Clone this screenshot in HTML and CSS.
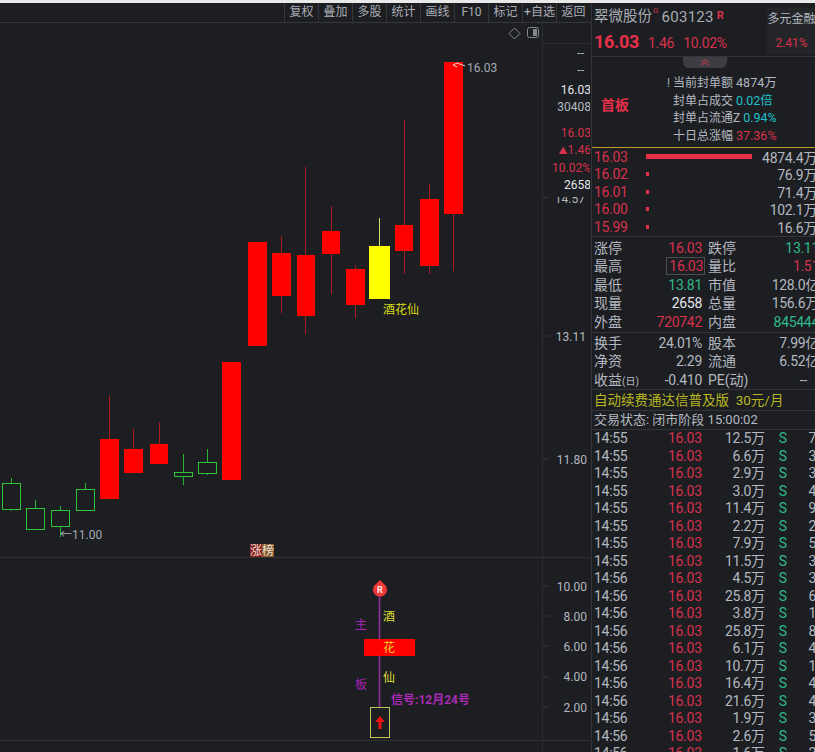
FILE: index.html
```html
<!DOCTYPE html>
<html lang="zh-CN">
<head>
    <meta charset="UTF-8">
    <meta name="viewport" content="width=device-width, initial-scale=1.0">
    <title>翠微股份 603123</title>
    <link rel="stylesheet" href="styles.css">
</head>
<body>
    <div class="topStrip"></div>
    <div class="app">
        <div class="left">
            <div class="toolbar">
                <div class="toolBtn">复权</div>
                <div class="toolBtn">叠加</div>
                <div class="toolBtn">多股</div>
                <div class="toolBtn">统计</div>
                <div class="toolBtn">画线</div>
                <div class="toolBtn">F10</div>
                <div class="toolBtn">标记</div>
                <div class="toolBtn">+自选</div>
                <div class="toolBtn">返回</div>
            </div>
            <svg class="chart" viewBox="0 23 590 729" width="590" height="729">
                <!-- frame lines -->
                <line class="grid" x1="542.5" y1="23" x2="542.5" y2="752"/>
                <line class="grid" x1="543" y1="43.5" x2="590" y2="43.5"/>
                <line class="divider" x1="0" y1="557.5" x2="590" y2="557.5"/>
                <line class="divider" x1="0" y1="740.5" x2="590" y2="740.5"/>

                <!-- top icons -->
                <polygon class="iconLine" points="514.5,28 520,33.5 514.5,39 509,33.5"/>
                <rect class="iconLine" x="527.5" y="27.5" width="11" height="10" rx="2"/>
                <rect class="iconFill" x="533" y="29" width="4" height="7"/>

                <!-- green candles -->
                <g class="green">
                    <path d="M11.5 478v5M11.5 510v1M35.5 500v8M60.5 506v4M60.5 527v10M85.5 483v6M183.5 454v19M183.5 477v8M207.5 449v13M207.5 474v1"/>
                    <rect x="2.5" y="483.5" width="18" height="26"/>
                    <rect x="26.5" y="508.5" width="18" height="21"/>
                    <rect x="51.5" y="510.5" width="18" height="16"/>
                    <rect x="76.5" y="489.5" width="18" height="21"/>
                    <rect x="174.5" y="472.5" width="18" height="4"/>
                    <rect x="198.5" y="462.5" width="18" height="11"/>
                </g>

                <!-- red candles: wicks -->
                <g class="wick">
                    <path d="M109.5 395v44M133.5 429v20M159.5 422v22M281.5 236v77M305.5 167v167M331.5 206v88M355.5 265v53M404.5 120v154M429.5 184v90M453.5 214v57"/>
                </g>
                <g class="red">
                    <rect x="100" y="439" width="19" height="60"/>
                    <rect x="124" y="449" width="19" height="24"/>
                    <rect x="150" y="444" width="18" height="20"/>
                    <rect x="222" y="362" width="19" height="118"/>
                    <rect x="248" y="242" width="19" height="104"/>
                    <rect x="272" y="253" width="19" height="43"/>
                    <rect x="297" y="255" width="18" height="61"/>
                    <rect x="322" y="231" width="18" height="23"/>
                    <rect x="346" y="269" width="19" height="36"/>
                    <rect x="395" y="225" width="18" height="26"/>
                    <rect x="420" y="199" width="19" height="67"/>
                    <rect x="444" y="62" width="19" height="152"/>
                </g>
                <line class="yellowWick" x1="379.5" y1="218" x2="379.5" y2="246"/>
                <rect class="yellowBody" x="369" y="246" width="21" height="53"/>
                <text class="yellowLabel" x="383" y="314">酒花仙</text>

                <!-- price marks -->
                <path class="mark" d="M453 65l4-2 8 3M453 65l4 2"/>
                <text class="mark-text" x="467" y="72">16.03</text>
                <text class="mark-text" x="60" y="539">←11.00</text>

                <!-- badge -->
                <rect class="badgeA" x="250" y="544" width="12" height="13"/>
                <rect class="badgeB" x="262" y="544" width="12" height="13"/>
                <text class="badgeText" x="250" y="555">涨榜</text>

                <!-- axis, upper; the quote box hides the top of 14.57 -->
                <g class="axis">
                    <text x="585" y="203">14.57</text>
                    <rect class="quoteBox" x="543" y="44" width="47" height="153"/>
                    <text x="584" y="57">--</text>
                    <text x="584" y="74">--</text>
                    <text x="591" y="94" class="white">16.03</text>
                    <text x="591" y="111">30408</text>
                    <text x="591" y="137" class="redText">16.03</text>
                    <text x="591" y="154" class="redText"><tspan class="tri">▲</tspan>1.46</text>
                    <text x="591" y="172" class="redText">10.02%</text>
                    <text x="591" y="189" class="white">2658</text>
                    <text x="586" y="341">13.11</text>
                    <text x="587" y="464">11.80</text>
                    <text x="587" y="591">10.00</text>
                    <text x="587" y="621">8.00</text>
                    <text x="587" y="651">6.00</text>
                    <text x="587" y="681">4.00</text>
                    <text x="587" y="712">2.00</text>
                </g>
                <path class="tick" d="M543 197.500h6M543 336h6M543 459h6M543 586h6M543 616h6M543 646h6M543 677h6M543 707h6"/>

                <!-- signal column -->
                <line class="signalLine" x1="379.5" y1="595" x2="379.5" y2="707"/>
                <path class="pin" d="M380 580l6 6a7 7 0 1 1-12 0z"/>
                <text class="pinText" x="380" y="593">R</text>
                <text class="sigYellow" x="383" y="621">酒</text>
                <text class="sigPurple" x="355" y="629">主</text>
                <rect class="red" x="364" y="639" width="51" height="17"/>
                <text class="sigOrange" x="383" y="652">花</text>
                <text class="sigYellow" x="383" y="682">仙</text>
                <text class="sigPurple" x="355" y="689">板</text>
                <text class="sigDate" x="391" y="704">信号:12月24号</text>
                <rect class="sigBox" x="370.5" y="707.5" width="19" height="30"/>
                <path class="sigArrow" d="M380 716l5 6h-3.500v7h-3v-7h-3.500z"/>
            </svg>
        </div>

        <div class="side">
            <div class="head">
                <div class="headMain">
                    <div class="nameRow">
                        <span class="name">翠微股份</span><sup class="flag">G</sup>
                        <span class="code">603123</span><sup class="flagR">R</sup>
                    </div>
                    <div class="priceRow">
                        <span class="lastPrice">16.03</span>
                        <span class="chg">1.46</span>
                        <span class="chg">10.02%</span>
                    </div>
                </div>
                <div class="sector">
                    <div class="sectorName">多元金融</div>
                    <div class="sectorPct">2.41%</div>
                </div>
            </div>

            <div class="seal">
                <div class="foldTab"><svg width="10" height="7" viewBox="0 0 10 7"><path d="M1 3.500l4-3 4 3M1 6.500l4-3 4 3" fill="none" stroke="#c8394c"/></svg></div>
                <div class="sealBody">
                    <div class="sealTag">首板</div>
                    <div class="sealLines">
                        <p><i class="bang">!</i>当前封单额 <span class="num">4874万</span></p>
                        <p>封单占成交 <span class="num cyan">0.02倍</span></p>
                        <p>封单占流通Z <span class="num cyan">0.94%</span></p>
                        <p>十日总涨幅 <span class="num pink">37.36%</span></p>
                    </div>
                </div>
            </div>

            <div class="orders">
                <div class="orderRow"><span class="oPrice">16.03</span><span class="oBar"><b class="barLong"></b></span><span class="oVol">4874.4万</span></div>
                <div class="orderRow"><span class="oPrice">16.02</span><span class="oBar"><b class="barDot"></b></span><span class="oVol">76.9万</span></div>
                <div class="orderRow"><span class="oPrice">16.01</span><span class="oBar"><b class="barDot"></b></span><span class="oVol">71.4万</span></div>
                <div class="orderRow"><span class="oPrice">16.00</span><span class="oBar"><b class="barDot"></b></span><span class="oVol">102.1万</span></div>
                <div class="orderRow"><span class="oPrice">15.99</span><span class="oBar"><b class="barDot"></b></span><span class="oVol">16.6万</span></div>
            </div>

            <div class="stats statsA">
                <div class="statRow"><span class="lab">涨停</span><span class="val pink"><em>16.03</em></span><span class="lab">跌停</span><span class="val2 green">13.11</span></div>
                <div class="statRow"><span class="lab">最高</span><span class="val pink"><em class="boxed">16.03</em></span><span class="lab">量比</span><span class="val2 pink">1.51</span></div>
                <div class="statRow"><span class="lab">最低</span><span class="val green"><em>13.81</em></span><span class="lab">市值</span><span class="val2">128.0亿</span></div>
                <div class="statRow"><span class="lab">现量</span><span class="val white"><em>2658</em></span><span class="lab">总量</span><span class="val2">156.6万</span></div>
                <div class="statRow"><span class="lab">外盘</span><span class="val pink"><em>720742</em></span><span class="lab">内盘</span><span class="val2 green">845444</span></div>
            </div>
            <div class="stats statsB">
                <div class="statRow"><span class="lab">换手</span><span class="val"><em>24.01%</em></span><span class="lab">股本</span><span class="val2">7.99亿</span></div>
                <div class="statRow"><span class="lab">净资</span><span class="val"><em>2.29</em></span><span class="lab">流通</span><span class="val2">6.52亿</span></div>
                <div class="statRow"><span class="lab">收益<small class="paren">(日)</small></span><span class="val"><em>-0.410</em></span><span class="lab">PE(动)</span><span class="val2 dash">--</span></div>
            </div>

            <div class="promo">自动续费通达信普及版&nbsp; 30元/月</div>
            <div class="status">交易状态: 闭市阶段 15:00:02</div>

            <div class="ticks">
                <div class="tick1"><span>14:55</span><span class="pink">16.03</span><span class="amt">12.5万</span><span class="green">S</span><span>7</span></div>
                <div class="tick1"><span>14:55</span><span class="pink">16.03</span><span class="amt">6.6万</span><span class="green">S</span><span>3</span></div>
                <div class="tick1"><span>14:55</span><span class="pink">16.03</span><span class="amt">2.9万</span><span class="green">S</span><span>3</span></div>
                <div class="tick1"><span>14:55</span><span class="pink">16.03</span><span class="amt">3.0万</span><span class="green">S</span><span>4</span></div>
                <div class="tick1"><span>14:55</span><span class="pink">16.03</span><span class="amt">11.4万</span><span class="green">S</span><span>9</span></div>
                <div class="tick1"><span>14:55</span><span class="pink">16.03</span><span class="amt">2.2万</span><span class="green">S</span><span>2</span></div>
                <div class="tick1"><span>14:55</span><span class="pink">16.03</span><span class="amt">7.9万</span><span class="green">S</span><span>5</span></div>
                <div class="tick1"><span>14:55</span><span class="pink">16.03</span><span class="amt">11.5万</span><span class="green">S</span><span>3</span></div>
                <div class="tick1"><span>14:56</span><span class="pink">16.03</span><span class="amt">4.5万</span><span class="green">S</span><span>3</span></div>
                <div class="tick1"><span>14:56</span><span class="pink">16.03</span><span class="amt">25.8万</span><span class="green">S</span><span>6</span></div>
                <div class="tick1"><span>14:56</span><span class="pink">16.03</span><span class="amt">3.8万</span><span class="green">S</span><span>1</span></div>
                <div class="tick1"><span>14:56</span><span class="pink">16.03</span><span class="amt">25.8万</span><span class="green">S</span><span>8</span></div>
                <div class="tick1"><span>14:56</span><span class="pink">16.03</span><span class="amt">6.1万</span><span class="green">S</span><span>4</span></div>
                <div class="tick1"><span>14:56</span><span class="pink">16.03</span><span class="amt">10.7万</span><span class="green">S</span><span>1</span></div>
                <div class="tick1"><span>14:56</span><span class="pink">16.03</span><span class="amt">16.4万</span><span class="green">S</span><span>4</span></div>
                <div class="tick1"><span>14:56</span><span class="pink">16.03</span><span class="amt">21.6万</span><span class="green">S</span><span>4</span></div>
                <div class="tick1"><span>14:56</span><span class="pink">16.03</span><span class="amt">1.9万</span><span class="green">S</span><span>3</span></div>
                <div class="tick1"><span>14:56</span><span class="pink">16.03</span><span class="amt">2.6万</span><span class="green">S</span><span>5</span></div>
                <div class="tick1"><span>14:56</span><span class="pink">16.03</span><span class="amt">1.6万</span><span class="green">S</span><span>2</span></div>
            </div>
        </div>
    </div>
</body>
</html>
```

FILE: styles.css
```css
html, body{
    margin: 0;
    height: 752px;
    overflow: hidden;
    background-color: #1c1e22;
}
body{
    font-family: Roboto, "Noto Sans CJK SC", sans-serif;
    font-size: 14px;
    color: #b4b8c0;
}
p{
    margin: 0;
}
em, i{
    font-style: normal;
}
.topStrip{
    height: 3px;
    background-color: #e9e9e9;
}
.app{
    display: flex;
    height: 749px;
}

/* left part: toolbar and chart */
.left{
    width: 591px;
    flex-shrink: 0;
}
.toolbar{
    display: flex;
    justify-content: flex-end;
    height: 19px;
    padding-right: 1px;
    border-bottom: 1px solid #35373b;
}
.toolBtn{
    width: 33px;
    border-left: 1px solid #35373b;
    text-align: center;
    font-size: 12px;
    line-height: 18px;
    color: #a9adb4;
    white-space: nowrap;
}
.chart{
    display: block;
}
.grid{
    stroke: #2a2c30;
}
.divider{
    stroke: #2e3034;
}
.iconLine{
    fill: none;
    stroke: #85888d;
}
.iconFill{
    fill: #85888d;
}
.green path{
    stroke: #25b52e;
}
.green rect{
    fill: none;
    stroke: #2ec43a;
}
.wick path{
    stroke: #a81b1f;
}
.red, .red rect{
    fill: #ff0000;
}
.yellowWick{
    stroke: #d8d870;
}
.yellowBody{
    fill: #ffff00;
}
.yellowLabel{
    fill: #dada10;
    font-size: 12px;
}
.mark{
    fill: none;
    stroke: #f0d8d8;
}
.mark-text{
    fill: #a6aab2;
    font-size: 12px;
}
.badgeA{
    fill: #8c1b1e;
}
.badgeB{
    fill: #8a5a2a;
}
.badgeText{
    fill: #e8e0d8;
    font-size: 12px;
}
.axis text{
    fill: #b4b8c0;
    font-size: 12px;
    text-anchor: end;
}
.axis .white{
    fill: #e4e6ea;
}
.axis .redText{
    fill: #d8324c;
}
.quoteBox{
    fill: #1c1e22;
}
.tri{
    font-size: 9px;
}
.tick{
    stroke: #33353a;
}
.signalLine{
    stroke: #96309c;
    stroke-width: 1.5;
}
.pin{
    fill: #f03838;
}
.pinText{
    fill: #ffe8e8;
    font-size: 9px;
    font-weight: 700;
    text-anchor: middle;
}
.sigYellow{
    fill: #dede30;
    font-size: 12px;
}
.sigOrange{
    fill: #f4d020;
    font-size: 12px;
}
.sigPurple{
    fill: #a822b4;
    font-size: 12px;
}
.sigDate{
    fill: #a92ab4;
    font-size: 12px;
    font-weight: 700;
}
.sigBox{
    fill: none;
    stroke: #c4c454;
}
.sigArrow{
    fill: #f01010;
}

/* right panel */
.side{
    width: 224px;
    flex-shrink: 0;
    overflow: hidden;
    border-left: 1px solid #33353a;
}
.head{
    display: flex;
    justify-content: space-between;
    height: 53px;
    border-bottom: 1px solid #33353a;
}
.headMain{
    padding-left: 2px;
}
.nameRow{
    display: flex;
    align-items: flex-start;
    height: 28px;
    line-height: 28px;
}
.name{
    font-size: 14.500px;
    color: #a9adb4;
}
.flag{
    color: #c8394c;
    font-size: 8px;
    line-height: 16px;
    margin: 0 3px 0 1px;
}
.code{
    font-size: 15px;
    letter-spacing: .3px;
    color: #a9adb4;
}
.flagR{
    color: #d8324c;
    font-size: 11px;
    font-weight: 700;
    line-height: 26px;
    margin-left: 3px;
}
.priceRow{
    display: flex;
    align-items: baseline;
    gap: 9px;
    color: #d8324c;
    line-height: 22px;
}
.lastPrice{
    font-size: 18px;
    font-weight: 700;
    letter-spacing: -.3px;
    color: #e6304a;
}
.chg{
    letter-spacing: -.3px;
}
.sector{
    width: 49px;
    height: 46px;
    margin-top: 5px;
    background-color: #242529;
    text-align: center;
    font-size: 12px;
}
.sectorName{
    line-height: 22px;
    white-space: nowrap;
}
.sectorPct{
    margin-top: 3px;
    line-height: 20px;
    color: #d8324c;
}
.seal{
    height: 90px;
    border-bottom: 1px solid #c49a2a;
}
.foldTab{
    width: 44px;
    height: 11px;
    margin-left: 91px;
    background-color: #3c3e44;
    border-radius: 0 0 6px 6px;
    text-align: center;
    line-height: 9px;
}
.sealBody{
    display: flex;
    align-items: flex-start;
    height: 79px;
}
.sealTag{
    width: 72px;
    margin-top: 27px;
    padding-left: 9px;
    line-height: 20px;
    color: #e6304a;
    font-weight: 700;
}
.sealLines{
    margin-top: 6px;
    font-size: 12px;
    white-space: nowrap;
}
.sealLines p{
    height: 17.500px;
    line-height: 17.500px;
}
.bang{
    margin-left: -6px;
    margin-right: 3px;
    color: #a9adb4;
}
.num{
    font-size: 12.500px;
}
.cyan{
    color: #1fc0c8;
}
.pink{
    color: #d8324c;
}
.green{
    color: #2fb88a;
}
.white{
    color: #e4e6ea;
}
.orders{
    height: 88px;
    border-bottom: 1px solid #33353a;
}
.orderRow{
    display: flex;
    align-items: center;
    height: 17.500px;
}
.oPrice{
    width: 52px;
    padding-left: 2px;
    color: #d8324c;
    letter-spacing: -.3px;
}
.oBar{
    flex: 1;
    display: flex;
    align-items: center;
}
.barLong{
    width: 106px;
    height: 5px;
    background-color: #e6304a;
}
.barDot{
    width: 3px;
    height: 4px;
    background-color: #e6304a;
}
.oVol{
    margin-right: -1px;
    color: #b4b8c0;
    letter-spacing: -.3px;
}
.stats{
    border-bottom: 1px solid #33353a;
}
.statsA{
    height: 93px;
    padding-top: 2px;
}
.statsB{
    height: 55px;
    padding-top: 1px;
}
.statRow{
    display: flex;
    height: 18.400px;
    line-height: 18.400px;
    white-space: nowrap;
}
.lab{
    width: 28px;
    padding-left: 2px;
    flex-shrink: 0;
}
.val{
    width: 80px;
    flex-shrink: 0;
    margin-right: 4px;
    text-align: right;
    letter-spacing: -.3px;
}
.val2{
    flex: 1;
    min-width: 0;
    margin-right: -3px;
    text-align: right;
    letter-spacing: -.3px;
}
.paren{
    font-size: 10px;
}
.boxed{
    display: inline-block;
    line-height: 16px;
    padding: 0 1px 0 2px;
    margin-right: -2px;
    outline: 1px solid #4c4e52;
}
.dash{
    padding-right: 12px;
}
.promo{
    height: 20px;
    line-height: 20px;
    padding-left: 2px;
    font-size: 13.500px;
    color: #b8b820;
    border-bottom: 1px solid #33353a;
}
.status{
    height: 18px;
    line-height: 18px;
    padding-left: 2px;
    font-size: 13px;
    border-bottom: 1px solid #33353a;
}
.tick1{
    display: flex;
    height: 17.500px;
    line-height: 17.500px;
    letter-spacing: -.3px;
}
.tick1 span:nth-child(1){
    width: 75px;
    padding-left: 2px;
}
.tick1 span:nth-child(2){
    width: 38px;
}
.tick1 .amt{
    width: 60px;
    text-align: right;
}
.tick1 span:nth-child(4){
    width: 30px;
    padding-left: 14px;
}
```
